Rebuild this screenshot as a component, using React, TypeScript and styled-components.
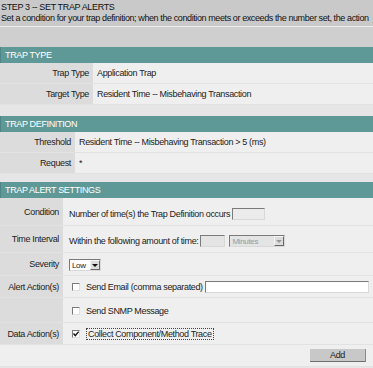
import React from 'react';
import styled, { createGlobalStyle } from 'styled-components';

const GlobalStyle = createGlobalStyle`
  body {
    margin: 0;
    background: #e6e6e6;
    font-family: "Liberation Sans", Arial, sans-serif;
    font-size: 9px;
    letter-spacing: -0.35px;
    color: #222;
  }
`;

const Page = styled.div`
  width: 373px;
  height: 368px;
  overflow: hidden;
  background: #e6e6e6;
`;

const Intro = styled.div`
  height: 27px;
  padding: 2px 0 0 1px;
  box-sizing: border-box;
  background: #c9c9c9;
  border-bottom: 1px solid #ededed;
  line-height: 11px;
  white-space: nowrap;
  overflow: hidden;
  color: #111;
`;

const Desc = styled.div`
  letter-spacing: -0.4px;
`;

const Band = styled.div`
  height: 20px;
  background: #cfcfcf;
`;

const Section = styled.div<{ $gap: number }>`
  margin-bottom: ${p => p.$gap}px;
`;

const Header = styled.div`
  height: 16px;
  background: #5f9997;
  color: #fff;
  display: flex;
  align-items: center;
  padding-left: 4px;
  border-left: 1px solid #4d8684;
`;

const Row = styled.div<{ $h: number }>`
  display: flex;
  height: ${p => p.$h}px;
  box-sizing: border-box;
  border-bottom: 1px solid #e2e2e2;
`;

const Label = styled.div<{ $w: number }>`
  flex: none;
  width: ${p => p.$w}px;
  box-sizing: border-box;
  background: #dcdcdc;
  display: flex;
  justify-content: flex-end;
  align-items: center;
  padding-right: 4px;
  color: #222;
`;

const Value = styled.div<{ $pl?: number; $pt?: number }>`
  flex: 1;
  background: #efefef;
  display: flex;
  align-items: center;
  padding-left: ${p => p.$pl ?? 4}px;
  padding-top: ${p => p.$pt ?? 0}px;
  white-space: nowrap;
  color: #222;
`;

const ButtonBar = styled.div`
  flex: 1;
  background: #efefef;
  display: flex;
  justify-content: flex-end;
  align-items: flex-end;
  padding: 0 7px 4px 0;
`;

const TextBox = styled.span<{ $w: number; $fill?: string }>`
  display: inline-block;
  width: ${p => p.$w}px;
  height: 12px;
  box-sizing: border-box;
  background: ${p => p.$fill ?? '#fff'};
  border-top: 1px solid #7a7a7a;
  border-left: 1px solid #7a7a7a;
  border-right: 1px solid #d8d8d8;
  border-bottom: 1px solid #d8d8d8;
  margin-left: 2px;
`;

const Select = styled.span<{ $w: number; $disabled?: boolean }>`
  display: inline-flex;
  align-items: center;
  justify-content: space-between;
  width: ${p => p.$w}px;
  height: 12px;
  box-sizing: border-box;
  background: ${p => (p.$disabled ? '#e4e4e4' : '#fff')};
  color: ${p => (p.$disabled ? '#9a9a9a' : '#222')};
  border-top: 1px solid #7a7a7a;
  border-left: 1px solid #7a7a7a;
  border-right: 1px solid #d8d8d8;
  border-bottom: 1px solid #d8d8d8;
  padding-left: 2px;
  margin-left: 4px;
  font-size: 8px;
`;

const Arrow = styled.span<{ $disabled?: boolean }>`
  width: 10px;
  height: 10px;
  box-sizing: border-box;
  background: #dcdcdc;
  border: 1px solid;
  border-color: #f4f4f4 #6a6a6a #6a6a6a #f4f4f4;
  display: flex;
  align-items: center;
  justify-content: center;
  &::after {
    content: '';
    border-left: 3px solid transparent;
    border-right: 3px solid transparent;
    border-top: 3px solid ${p => (p.$disabled ? '#999' : '#111')};
  }
`;

const Check = styled.span`
  flex: none;
  width: 8px;
  height: 8px;
  box-sizing: border-box;
  background: #fff;
  border-top: 1px solid #7a7a7a;
  border-left: 1px solid #7a7a7a;
  border-right: 1px solid #e0e0e0;
  border-bottom: 1px solid #e0e0e0;
  margin-right: 6px;
  display: flex;
  align-items: center;
  justify-content: center;
`;

const Focus = styled.span`
  border: 1px dotted #444;
  padding: 0 1px;
  line-height: 10px;
`;

const Button = styled.span`
  width: 56px;
  height: 13px;
  box-sizing: border-box;
  background: #c8c8c8;
  border-bottom: 1px solid #6e6e6e;
  border-right: 1px solid #8a8a8a;
  display: flex;
  align-items: center;
  justify-content: center;
  color: #222;
`;

const App: React.FC = () => {
  return (
    <Page>
      <GlobalStyle />
      <Intro>
        STEP 3 -- SET TRAP ALERTS
        <Desc>
          Set a condition for your trap definition; when the condition meets or exceeds the number set, the action
        </Desc>
      </Intro>
      <Band />

      <Section $gap={11}>
        <Header>TRAP TYPE</Header>
        <Row $h={21}>
          <Label $w={93}>Trap Type</Label>
          <Value>Application Trap</Value>
        </Row>
        <Row $h={21}>
          <Label $w={93}>Target Type</Label>
          <Value>Resident Time -- Misbehaving Transaction</Value>
        </Row>
      </Section>

      <Section $gap={8}>
        <Header>TRAP DEFINITION</Header>
        <Row $h={21}>
          <Label $w={75}>Threshold</Label>
          <Value>Resident Time -- Misbehaving Transaction &gt; 5 (ms)</Value>
        </Row>
        <Row $h={21}>
          <Label $w={75}>Request</Label>
          <Value>*</Value>
        </Row>
      </Section>

      <Section $gap={0}>
        <Header>TRAP ALERT SETTINGS</Header>
        <Row $h={28}>
          <Label $w={63}>Condition</Label>
          <Value $pl={6} $pt={5}>
            Number of time(s) the Trap Definition occurs
            <TextBox $w={33} $fill="#ebebeb" />
          </Value>
        </Row>
        <Row $h={27}>
          <Label $w={63}>Time Interval</Label>
          <Value $pl={6} $pt={4}>
            Within the following amount of time:
            <TextBox $w={25} $fill="#e4e4e4" />
            <Select $w={56} $disabled>
              Minutes
              <Arrow $disabled />
            </Select>
          </Value>
        </Row>
        <Row $h={23}>
          <Label $w={63}>Severity</Label>
          <Value $pl={2} $pt={2}>
            <Select $w={32}>
              Low
              <Arrow />
            </Select>
          </Value>
        </Row>
        <Row $h={22}>
          <Label $w={63}>Alert Action(s)</Label>
          <Value $pl={9}>
            <Check />
            Send Email (comma separated)
            <TextBox $w={164} />
          </Value>
        </Row>
        <Row $h={25}>
          <Label $w={63} />
          <Value $pl={9} $pt={2}>
            <Check />
            Send SNMP Message
          </Value>
        </Row>
        <Row $h={22}>
          <Label $w={63}>Data Action(s)</Label>
          <Value $pl={9}>
            <Check>
              <svg width="6" height="6" viewBox="0 0 6 6">
                <path d="M0.5 2.5 L2.3 4.6 L5.6 0.6" fill="none" stroke="#111" strokeWidth="1.4" />
              </svg>
            </Check>
            <Focus>Collect Component/Method Trace</Focus>
          </Value>
        </Row>
        <Row $h={22}>
          <ButtonBar>
            <Button>Add</Button>
          </ButtonBar>
        </Row>
      </Section>
    </Page>
  );
};

export default App;
